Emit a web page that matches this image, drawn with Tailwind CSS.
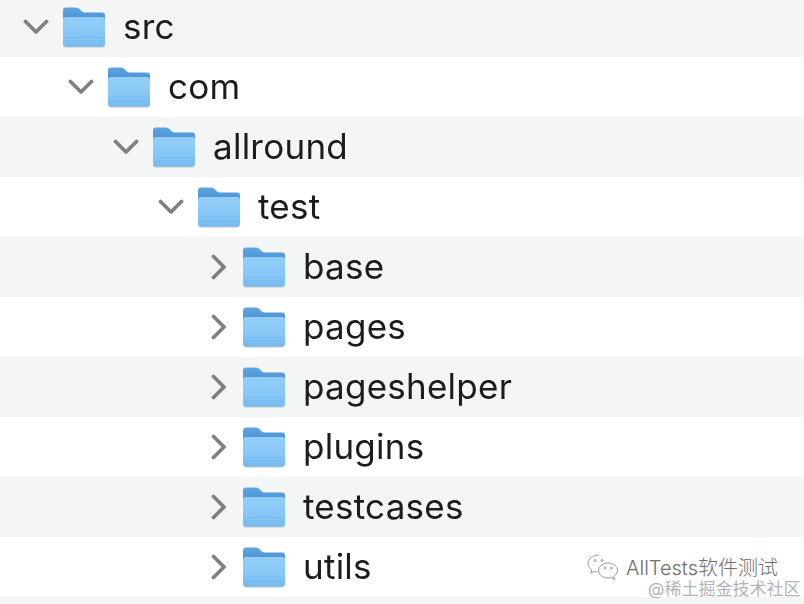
<!DOCTYPE html>
<html lang="en">
<head>
  <meta charset="UTF-8">
  <title>Project tree</title>
  <script src="https://cdn.jsdelivr.net/npm/@tailwindcss/browser@4"></script>
</head>
<body class="relative w-[804px] h-[604px] overflow-hidden bg-white font-['Inter','Noto_Sans_CJK_SC',sans-serif] text-[#1c1c1c]">
  <svg width="0" height="0" class="absolute">
    <defs>
      <linearGradient id="body" x1="0" y1="0" x2="0" y2="1">
        <stop offset="0" stop-color="#93cff9"/>
        <stop offset="0.7" stop-color="#84c5f6"/>
        <stop offset="1" stop-color="#74b9ef"/>
      </linearGradient>
      <linearGradient id="tab" x1="0" y1="0" x2="0" y2="1">
        <stop offset="0" stop-color="#5fa5e2"/>
        <stop offset="1" stop-color="#4189ce"/>
      </linearGradient>
      <symbol id="folder" viewBox="0 0 46 42">
        <path d="M2 36V38Q2 41.500 5.500 41.500H40.500Q44 41.500 44 38V36Z" fill="#6f7f8c" opacity="0.450"/>
        <path d="M2 12V4.500Q2 1.500 5 1.500H15Q17 1.500 18.500 3L21 5.500Q22 6.500 24 6.500H41Q44 6.500 44 9.500V20H2Z" fill="url(#tab)"/>
        <path d="M2 13.500Q2 11 5 11H41Q44 11 44 13.500V37Q44 40.500 40.500 40.500H5.500Q2 40.500 2 37Z" fill="url(#body)"/>
        <path d="M2 31.500H44M2 35H44" stroke="#6fb3ea" stroke-width="0.700" opacity="0.700" fill="none"/>
      </symbol>
      <symbol id="chev-down" viewBox="0 0 26 16">
        <path d="M2.500 2.500L13 13L23.500 2.500" fill="none" stroke="#808080" stroke-width="3.800" stroke-linecap="round" stroke-linejoin="round"/>
      </symbol>
      <symbol id="chev-right" viewBox="0 0 16 26">
        <path d="M2.500 2.500L13 13L2.500 23.500" fill="none" stroke="#808080" stroke-width="3.800" stroke-linecap="round" stroke-linejoin="round"/>
      </symbol>
    </defs>
  </svg>

  <div class="flex flex-col mt-[-3px] h-[607px] text-[35px] tracking-[0.25px] leading-none blur-[0.4px]">
    <div class="h-[60px] shrink-0 flex items-center bg-[#f4f5f5] pl-[23px]">
      <svg class="w-[26px] h-[16px] mr-[12px]"><use href="#chev-down"/></svg>
      <svg class="w-[46px] h-[42px] mr-[16px]"><use href="#folder"/></svg>
      <span class="mt-[-2px]">src</span>
    </div>
    <div class="h-[60px] shrink-0 flex items-center bg-white pl-[68px]">
      <svg class="w-[26px] h-[16px] mr-[12px]"><use href="#chev-down"/></svg>
      <svg class="w-[46px] h-[42px] mr-[16px]"><use href="#folder"/></svg>
      <span class="mt-[-2px]">com</span>
    </div>
    <div class="h-[60px] shrink-0 flex items-center bg-[#f4f5f5] pl-[113px]">
      <svg class="w-[26px] h-[16px] mr-[12px]"><use href="#chev-down"/></svg>
      <svg class="w-[46px] h-[42px] mr-[16px]"><use href="#folder"/></svg>
      <span class="mt-[-2px]">allround</span>
    </div>
    <div class="h-[60px] shrink-0 flex items-center bg-white pl-[158px]">
      <svg class="w-[26px] h-[16px] mr-[12px]"><use href="#chev-down"/></svg>
      <svg class="w-[46px] h-[42px] mr-[16px]"><use href="#folder"/></svg>
      <span class="mt-[-2px]">test</span>
    </div>
    <div class="h-[60px] shrink-0 flex items-center bg-[#f4f5f5] pl-[211px]">
      <svg class="w-[16px] h-[26px] mr-[14px]"><use href="#chev-right"/></svg>
      <svg class="w-[46px] h-[42px] mr-[16px]"><use href="#folder"/></svg>
      <span class="mt-[-2px]">base</span>
    </div>
    <div class="h-[60px] shrink-0 flex items-center bg-white pl-[211px]">
      <svg class="w-[16px] h-[26px] mr-[14px]"><use href="#chev-right"/></svg>
      <svg class="w-[46px] h-[42px] mr-[16px]"><use href="#folder"/></svg>
      <span class="mt-[-2px]">pages</span>
    </div>
    <div class="h-[60px] shrink-0 flex items-center bg-[#f4f5f5] pl-[211px]">
      <svg class="w-[16px] h-[26px] mr-[14px]"><use href="#chev-right"/></svg>
      <svg class="w-[46px] h-[42px] mr-[16px]"><use href="#folder"/></svg>
      <span class="mt-[-2px]">pageshelper</span>
    </div>
    <div class="h-[60px] shrink-0 flex items-center bg-white pl-[211px]">
      <svg class="w-[16px] h-[26px] mr-[14px]"><use href="#chev-right"/></svg>
      <svg class="w-[46px] h-[42px] mr-[16px]"><use href="#folder"/></svg>
      <span class="mt-[-2px]">plugins</span>
    </div>
    <div class="h-[60px] shrink-0 flex items-center bg-[#f4f5f5] pl-[211px]">
      <svg class="w-[16px] h-[26px] mr-[14px]"><use href="#chev-right"/></svg>
      <svg class="w-[46px] h-[42px] mr-[16px]"><use href="#folder"/></svg>
      <span class="mt-[-2px]">testcases</span>
    </div>
    <div class="h-[60px] shrink-0 flex items-center bg-white pl-[211px]">
      <svg class="w-[16px] h-[26px] mr-[14px]"><use href="#chev-right"/></svg>
      <svg class="w-[46px] h-[42px] mr-[16px]"><use href="#folder"/></svg>
      <span class="mt-[-2px]">utils</span>
    </div>
    <div class="flex-1 bg-[#f4f5f5]"></div>
  </div>

  <!-- watermark -->
  <div class="absolute left-[587px] top-[554px] flex items-center gap-[7px] text-[20px] leading-none text-[#6e6e6e] font-light">
    <svg width="32" height="28" viewBox="0 0 32 28" fill="none" stroke="#8a8a8a" stroke-width="0.900">
      <path d="M12 1C6 1 1 4.800 1 9.600C1 12.300 2.500 14.500 4.800 16L3.800 19L7.300 17.300C8.300 17.600 9.300 17.800 10.500 17.800"/>
      <path d="M21 9C15.800 9 11.500 12.400 11.500 16.500C11.500 20.600 15.800 24 21 24C22 24 23 23.800 24 23.500L27.500 25.500L26.500 22.400C29 21 30.500 18.800 30.500 16.500C30.500 12.400 26.200 9 21 9Z"/>
      <circle cx="8" cy="6.500" r="1"/><circle cx="15" cy="6.500" r="1"/>
      <circle cx="18" cy="14" r="0.900"/><circle cx="24.500" cy="14" r="0.900"/>
    </svg>
    <span>AllTests软件测试</span>
  </div>
  <div class="absolute left-[648px] top-[581px] text-[17px] leading-none text-[#b4b4b4]">@稀土掘金技术社区</div>
</body>
</html>
